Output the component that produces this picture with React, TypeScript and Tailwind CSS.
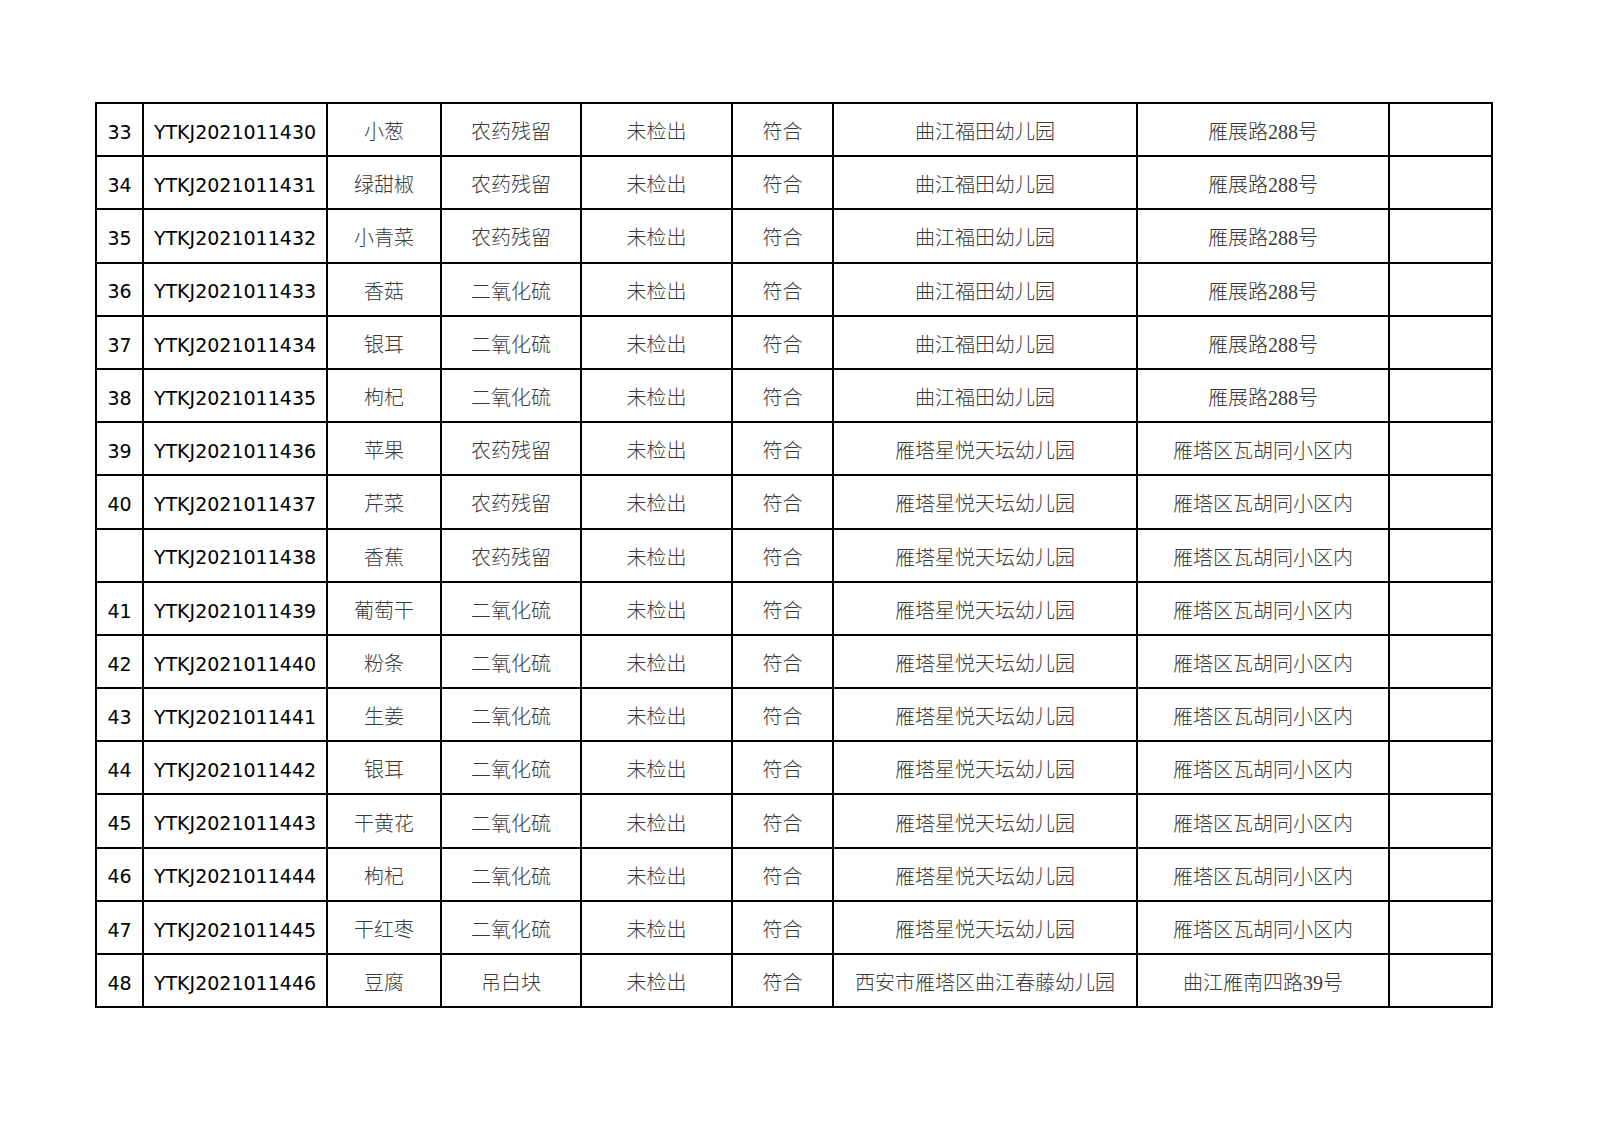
type Row = {
  no: string;
  code: string;
  name: string;
  item: string;
  result: string;
  verdict: string;
  unit: string;
  address: string;
};

const FUTIAN = "曲江福田幼儿园";
const FUTIAN_ADDR = "雁展路288号";
const XINGYUE = "雁塔星悦天坛幼儿园";
const XINGYUE_ADDR = "雁塔区瓦胡同小区内";

const raw: [string, string, string, string, string, string][] = [
  ["33", "1430", "小葱", "农药残留", FUTIAN, FUTIAN_ADDR],
  ["34", "1431", "绿甜椒", "农药残留", FUTIAN, FUTIAN_ADDR],
  ["35", "1432", "小青菜", "农药残留", FUTIAN, FUTIAN_ADDR],
  ["36", "1433", "香菇", "二氧化硫", FUTIAN, FUTIAN_ADDR],
  ["37", "1434", "银耳", "二氧化硫", FUTIAN, FUTIAN_ADDR],
  ["38", "1435", "枸杞", "二氧化硫", FUTIAN, FUTIAN_ADDR],
  ["39", "1436", "苹果", "农药残留", XINGYUE, XINGYUE_ADDR],
  ["40", "1437", "芹菜", "农药残留", XINGYUE, XINGYUE_ADDR],
  ["", "1438", "香蕉", "农药残留", XINGYUE, XINGYUE_ADDR],
  ["41", "1439", "葡萄干", "二氧化硫", XINGYUE, XINGYUE_ADDR],
  ["42", "1440", "粉条", "二氧化硫", XINGYUE, XINGYUE_ADDR],
  ["43", "1441", "生姜", "二氧化硫", XINGYUE, XINGYUE_ADDR],
  ["44", "1442", "银耳", "二氧化硫", XINGYUE, XINGYUE_ADDR],
  ["45", "1443", "干黄花", "二氧化硫", XINGYUE, XINGYUE_ADDR],
  ["46", "1444", "枸杞", "二氧化硫", XINGYUE, XINGYUE_ADDR],
  ["47", "1445", "干红枣", "二氧化硫", XINGYUE, XINGYUE_ADDR],
  ["48", "1446", "豆腐", "吊白块", "西安市雁塔区曲江春藤幼儿园", "曲江雁南四路39号"],
];

const rows: Row[] = raw.map(([no, tail, name, item, unit, address]) => ({
  no,
  code: `YTKJ202101${tail}`,
  name,
  item,
  result: "未检出",
  verdict: "符合",
  unit,
  address,
}));

const latin = "font-['DejaVu_Sans',sans-serif] text-[19px] text-black";
const cjk =
  "font-['Liberation_Serif','Noto_Sans_CJK_SC',serif] font-light text-[20px] text-[#3a3a3a]";
const cell = "border-2 border-black text-center align-middle px-0 pt-[5px] pb-0 whitespace-nowrap";

export default function App() {
  return (
    <div className="w-[1600px] h-[1131px] bg-white pt-[102px] pl-[95px]">
      <table className="table-fixed border-collapse w-[1396px]">
        <colgroup>
          <col className="w-[47px]" />
          <col className="w-[184px]" />
          <col className="w-[114px]" />
          <col className="w-[140px]" />
          <col className="w-[151px]" />
          <col className="w-[101px]" />
          <col className="w-[304px]" />
          <col className="w-[252px]" />
          <col className="w-[103px]" />
        </colgroup>
        <tbody>
          {rows.map((r) => (
            <tr key={r.code} className="h-[53.2px]">
              <td className={`${cell} ${latin}`}>{r.no}</td>
              <td className={`${cell} ${latin}`}>{r.code}</td>
              <td className={`${cell} ${cjk}`}>{r.name}</td>
              <td className={`${cell} ${cjk}`}>{r.item}</td>
              <td className={`${cell} ${cjk}`}>{r.result}</td>
              <td className={`${cell} ${cjk}`}>{r.verdict}</td>
              <td className={`${cell} ${cjk}`}>{r.unit}</td>
              <td className={`${cell} ${cjk}`}>{r.address}</td>
              <td className={cell}></td>
            </tr>
          ))}
        </tbody>
      </table>
    </div>
  );
}
